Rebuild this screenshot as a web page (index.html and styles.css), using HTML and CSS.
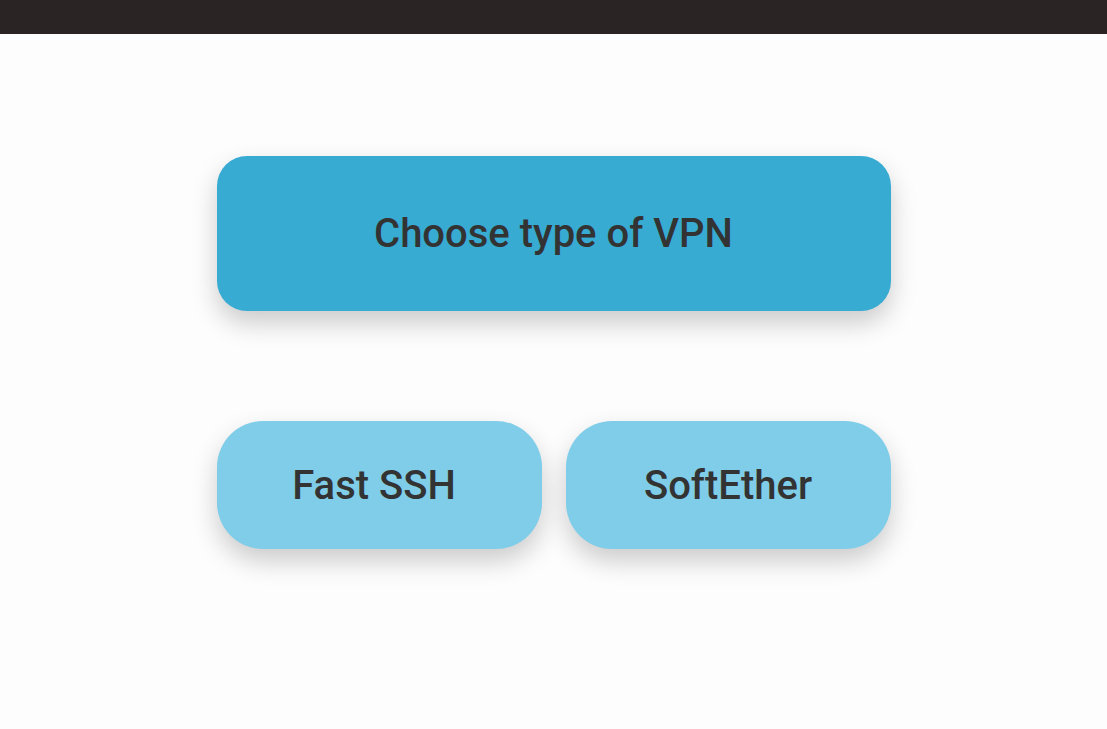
FILE: index.html
```html
<!DOCTYPE html>
<html>
<head>
<meta charset="utf-8">
<link rel="stylesheet" href="styles.css">
</head>
<body>
<div class="topbar"></div>
<main class="content">
  <div class="title-card">Choose type of VPN</div>
  <div class="choices">
    <button class="choice choice-ssh">Fast SSH</button>
    <button class="choice">SoftEther</button>
  </div>
</main>
</body>
</html>
```
FILE: styles.css
```css
html, body {
  margin: 0;
  padding: 0;
  background: #fdfdfd;
  font-family: Roboto, "Liberation Sans", sans-serif;
}
body {
  min-height: 100vh;
}
.topbar {
  height: 34px;
  background: #2a2424;
}
.content {
  width: 674px;
  margin: 122px auto 0;
  padding-bottom: 120px;
  display: flex;
  flex-direction: column;
  gap: 110px;
}
.title-card {
  height: 155px;
  border-radius: 30px;
  background: #38abd3;
  color: #333333;
  font-size: 40px;
  font-weight: 500;
  display: flex;
  align-items: center;
  justify-content: center;
  box-shadow: 0 12px 26px rgba(0, 0, 0, 0.2);
}
.choices {
  display: grid;
  grid-template-columns: 1fr 1fr;
  gap: 24px;
}
.choice {
  height: 128px;
  border: none;
  border-radius: 46px;
  background: #7fcde8;
  color: #333333;
  font-family: Roboto, "Liberation Sans", sans-serif;
  font-size: 40px;
  font-weight: 500;
  padding: 0;
  box-shadow: 0 12px 26px rgba(0, 0, 0, 0.2);
  cursor: pointer;
}
.choice-ssh {
  text-indent: -10px;
}
```
